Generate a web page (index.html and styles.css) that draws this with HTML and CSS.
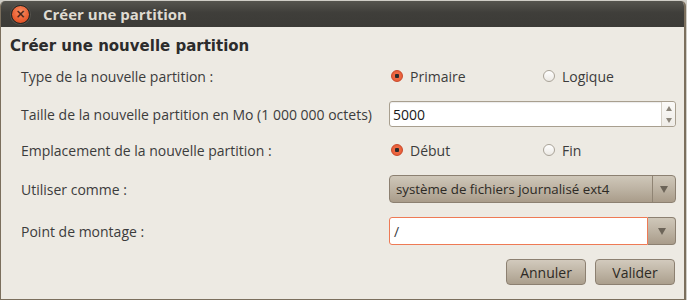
FILE: index.html
```html
<!DOCTYPE html>
<html lang="fr">
<head>
    <meta charset="UTF-8">
    <title>Créer une partition</title>
    <link rel="stylesheet" href="styles.css">
</head>
<body>
    <div class="window">
        <!-- barre de titre -->
        <div class="titlebar">
            <span class="close"><span class="close-x">×</span></span>
            <span class="title">Créer une partition</span>
        </div>

        <div class="content">
            <h1>Créer une nouvelle partition</h1>

            <div class="row row-first">
                <label>Type de la nouvelle partition :</label>
                <div class="radios">
                    <span class="option"><span class="radio checked"></span>Primaire</span>
                    <span class="option"><span class="radio"></span>Logique</span>
                </div>
            </div>

            <div class="row row-gap12">
                <label>Taille de la nouvelle partition en Mo (1 000 000 octets)</label>
                <div class="spin">
                    <span class="spin-text">5000</span>
                    <span class="spin-btns">
                        <span class="tri-up"></span>
                        <span class="tri-down"></span>
                    </span>
                </div>
            </div>

            <div class="row row-gap10">
                <label>Emplacement de la nouvelle partition :</label>
                <div class="radios">
                    <span class="option"><span class="radio checked"></span>Début</span>
                    <span class="option"><span class="radio"></span>Fin</span>
                </div>
            </div>

            <div class="row row-tall row-gap12">
                <label>Utiliser comme :</label>
                <div class="combo">
                    <span class="combo-text">système de fichiers journalisé ext4</span>
                    <span class="combo-arrow"><span class="tri-down dark"></span></span>
                </div>
            </div>

            <div class="row row-tall row-gap14">
                <label>Point de montage :</label>
                <div class="combo-entry">
                    <span class="entry">/</span>
                    <span class="entry-arrow"><span class="tri-down dark"></span></span>
                </div>
            </div>

            <div class="buttons">
                <button class="btn">Annuler</button>
                <button class="btn">Valider</button>
            </div>
        </div>
    </div>
</body>
</html>
```

FILE: styles.css
```css
/* page */
body {
    margin: 0;
    background: #cfcdc6;
    font-family: "Open Sans", "DejaVu Sans", sans-serif;
    font-size: 14px;
    color: #3c3c3c;
}

.window {
    width: 683px;
    height: 298px;
    margin-top: 1px;
    background: #edeae3;
    border-left: 1px solid #7b6f5d;
    border-right: 2px solid #7b6f5d;
    border-bottom: 1px solid #7b6f5d;
    border-radius: 5px 5px 0 0;
    overflow: hidden;
}

/* barre de titre */
.titlebar {
    height: 26px;
    display: flex;
    align-items: center;
    background: linear-gradient(#56554f, #3f3e3a 45%, #3c3b37);
}

.close {
    width: 17px;
    height: 17px;
    margin-left: 10px;
    border-radius: 50%;
    border: 1px solid #262522;
    box-shadow: 0 0 0 1px #55534d;
    background: radial-gradient(circle at 50% 35%, #f79066, #e85a2d 65%, #c2451f);
    display: flex;
    align-items: center;
    justify-content: center;
}

.close-x {
    color: #4a2416;
    font-family: "DejaVu Sans", sans-serif;
    font-size: 12px;
    font-weight: bold;
    line-height: 1;
}

.title {
    margin-left: 13px;
    color: #dfdbd2;
    font-weight: bold;
    font-size: 15px;
}

/* contenu */
.content {
    padding-top: 8px;
}

h1 {
    margin: 0 0 0 9px;
    height: 22px;
    line-height: 22px;
    font-family: "DejaVu Sans", sans-serif;
    font-size: 15px;
    font-weight: bold;
    color: #2c2c2c;
}

/* lignes du formulaire */
.row {
    display: flex;
    height: 26px;
    padding-left: 20px;
}

.row-first { margin-top: 6px; }
.row-gap10 { margin-top: 10px; }
.row-gap12 { margin-top: 12px; }
.row-gap14 { margin-top: 14px; }

.row-tall {
    height: 28px;
}

label {
    width: 368px;
    flex-shrink: 0;
    display: flex;
    align-items: center;
}

/* boutons radio */
.radios {
    display: flex;
    align-items: center;
    padding-left: 2px;
}

.option {
    display: flex;
    align-items: center;
    width: 152px;
    flex-shrink: 0;
}

.radio {
    width: 10px;
    height: 10px;
    border-radius: 50%;
    border: 1px solid #a9a398;
    background: linear-gradient(#ffffff, #ece9e4);
    margin-right: 7px;
}

.radio.checked {
    border-color: #c9482a;
    background: radial-gradient(circle, #2b2b2b 0 2px, #f06b44 2.5px, #e0532f);
}

/* champ numérique */
.spin {
    width: 285px;
    flex-shrink: 0;
    display: flex;
    background: #fff;
    border: 1px solid #a89f8f;
    border-radius: 3px;
    box-shadow: inset 0 1px 1px rgba(0, 0, 0, 0.08);
}

.spin-text {
    flex: 1;
    display: flex;
    align-items: center;
    padding-left: 3px;
    color: #1a1a1a;
}

.spin-btns {
    width: 13px;
    border-left: 1px solid #d4cfc5;
    display: flex;
    flex-direction: column;
    align-items: center;
    justify-content: space-around;
    background: linear-gradient(#fbfaf8, #efece7);
    border-radius: 0 3px 3px 0;
}

.tri-up {
    width: 0;
    height: 0;
    border-left: 3px solid transparent;
    border-right: 3px solid transparent;
    border-bottom: 5px solid #8d877c;
}

.tri-down {
    width: 0;
    height: 0;
    border-left: 3px solid transparent;
    border-right: 3px solid transparent;
    border-top: 5px solid #8d877c;
}

.tri-down.dark {
    border-left-width: 4px;
    border-right-width: 4px;
    border-top: 7px solid #6c6458;
}

/* liste déroulante */
.combo {
    width: 285px;
    flex-shrink: 0;
    display: flex;
    border: 1px solid #8c8071;
    border-radius: 4px;
    background: linear-gradient(#cfc7b9, #bdb3a3 50%, #a99c8a);
}

.combo-text {
    flex: 1;
    display: flex;
    align-items: center;
    padding-left: 6px;
    font-size: 13.3px;
    color: #2d2a25;
}

.combo-arrow {
    width: 22px;
    border-left: 1px solid #8f8474;
    display: flex;
    align-items: center;
    justify-content: center;
}

/* entrée avec liste */
.combo-entry {
    width: 287px;
    flex-shrink: 0;
    display: flex;
}

.entry {
    flex: 1;
    display: flex;
    align-items: center;
    padding-left: 4px;
    background: #fff;
    border: 1px solid #ee7a55;
    border-radius: 3px 0 0 3px;
    color: #3a3a3a;
}

.entry-arrow {
    width: 27px;
    display: flex;
    align-items: center;
    justify-content: center;
    border: 1px solid #8c8071;
    border-left: none;
    border-radius: 0 4px 4px 0;
    background: linear-gradient(#cfc7b9, #bdb3a3 50%, #a99c8a);
}

/* boutons */
.buttons {
    display: flex;
    justify-content: flex-end;
    gap: 9px;
    padding-right: 9px;
    margin-top: 14px;
}

.btn {
    width: 80px;
    height: 26px;
    font-family: inherit;
    font-size: 14px;
    color: #2d2a25;
    border: 1px solid #8c8071;
    border-radius: 4px;
    background: linear-gradient(#d2cabd, #bfb5a5 50%, #ab9f8d);
    padding: 0;
}
```
